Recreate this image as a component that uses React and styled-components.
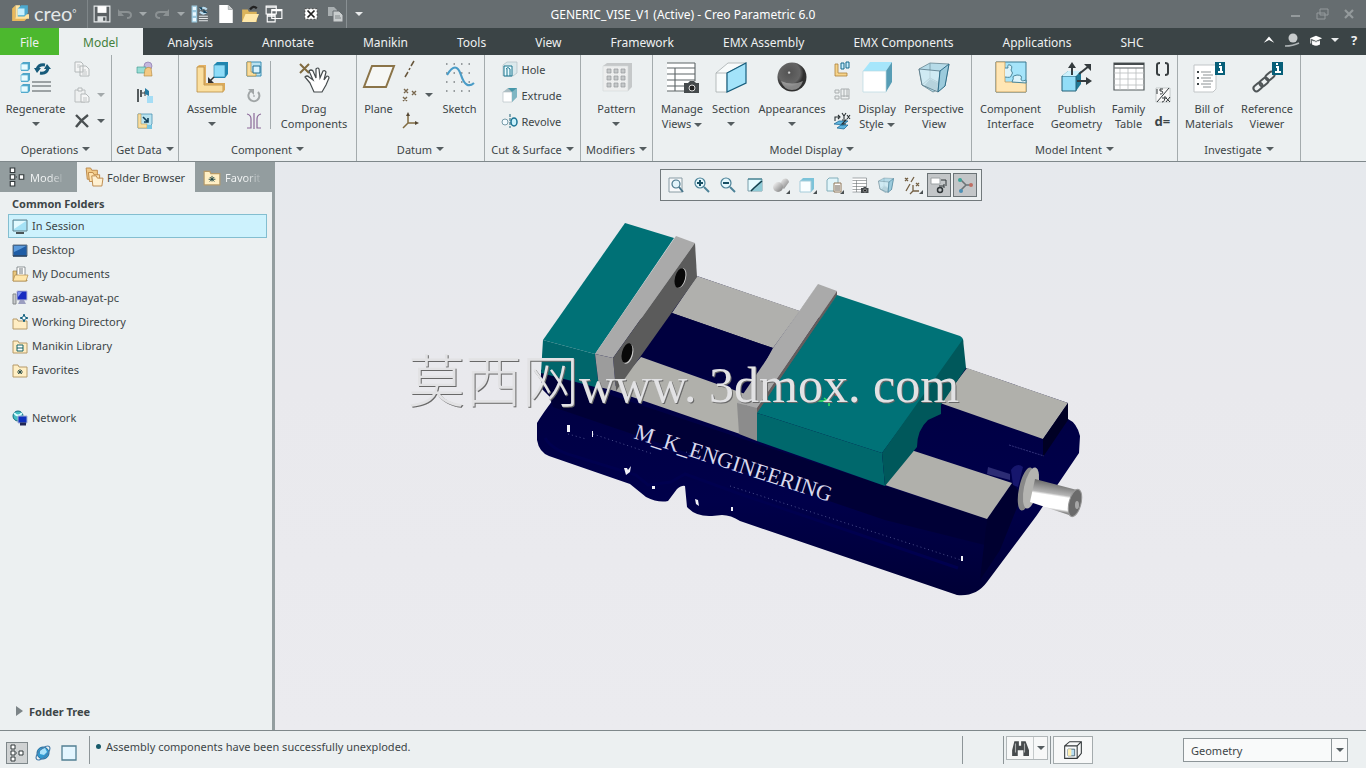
import styled, { createGlobalStyle } from "styled-components";
import { useState } from "react";

const ICONS = {
  logo: <><path d="M1 4l3-3v11h11l-3 3H1z" fill="#e9b85c" /><path d="M4 1h4v8h8v4H4z" fill="#ffe3a1" /><path d="M6 4l3-3h6v7l-3 3H6z" fill="#4da9cf" /><path d="M6 4h6v6H6z" fill="#c8f0fd" /></>,
  save: <><path d="M1 1h14v14H1z" fill="#5b6164" stroke="#e4e8e9" /><path d="M4 1h8v6H4z" fill="#fff" /><path d="M4 10h8v5H4z" fill="#dfe3e4" /><path d="M9 11h2v3H9z" fill="#4d5457" /></>,
  undo: <><path d="M2 6h8q4 0 4 3t-4 3" stroke="#8b9193" strokeWidth="2" /><path d="M1 3v7h6z" fill="#8b9193" /></>,
  redo: <><path d="M14 6H6Q2 6 2 9t4 3" stroke="#8b9193" strokeWidth="2" /><path d="M15 3v7H9z" fill="#8b9193" /></>,
  regenSmall: <><path d="M1 1h4v4H1zM1 6h4v4H1zM1 11h4v4H1z" fill="#e9f8ff" stroke="#9cc9de" /><path d="M8 4q3-3 6 0M14 6q-3 3-6 0" stroke="#b9dcef" strokeWidth="2" /><path d="M7 2h3v3zM15 7h-4V4z" fill="#17445c" /><path d="M7 10h8M7 12h8M7 14h8" stroke="#e4e8e9" /></>,
  newFile: <><path d="M2 0h8l4 4v12H2z" fill="#fff" /><path d="M10 0v4h4" fill="#c9cdce" stroke="#8b9193" strokeWidth=".5" /></>,
  open: <><path d="M1 4h5l1 2h7v9H1z" fill="#dcb45b" /><path d="M1 15l3-7h12l-3 7z" fill="#ffe8aa" /><path d="M8 4q3-4 6-1" stroke="#222" strokeWidth="2" /></>,
  windows: <><path d="M1 1h9v7H1zM6 4h9v8H6zM2 9h7v6H2z" fill="#666d70" stroke="#fff" /><path d="M1 2h9M6 5h9M2 10h7" stroke="#fff" /></>,
  closeWin: <><path d="M1 2h14v12H1z" fill="#fff" /><path d="M4 4l8 8M12 4l-8 8" stroke="#222" strokeWidth="2" /><path d="M1 2h14v12H1z" stroke="#333" strokeDasharray="2 2" /></>,
  copyGray: <><path d="M1 1h6l3 3v6H1z" fill="#a9afb1" /><path d="M6 5h6l4 4v7H6z" fill="#c9cdce" stroke="#666d70" /><path d="M8 10h5M8 12h6" stroke="#81888a" /></>,
  copy: <><path d="M1 1h6l2 2v8H1zM6 5h6l3 3v7H6z" fill="#f4f5f5" stroke="#b3b8b9" /><path d="M3 4h3M3 6h3M8 9h4M8 11h5M8 13h5" stroke="#c2c6c7" /></>,
  paste: <><path d="M1 3h10v12H1z" fill="#eef0f0" stroke="#b9bdbe" /><path d="M4 1h4v3H4zM7 7h5l3 3v5H7z" fill="#f5f6f6" stroke="#b3b8b9" /><path d="M9 11h4M9 13h4" stroke="#c2c6c7" /></>,
  remove: <path d="M2 2l12 12M14 2q-7 5-12 12" stroke="#4a5052" strokeWidth="2.4" />,
  regenerate: <><path d="M1 3l2-2h7v7L8 10H1zM1 14l2-2h7v7l-2 2H1zM1 25l2-2h7v7l-2 2H1z" fill="#4fa5c8" /><path d="M1 3h7v6H1zM1 14h7v6H1zM1 25h7v6H1z" fill="#e9fbff" stroke="#5db4d6" strokeWidth=".7" /><path d="M17 8q2-5 8-4M28 7q-1 6-8 5" stroke="#175a7a" strokeWidth="3" /><path d="M14 7h7l-4 5zM24 8h7l-4-5z" fill="#175a7a" /><path d="M12 21h19M12 25h19M12 30h19" stroke="#81888a" strokeWidth="1.4" /></>,
  userDef: <><circle cx="11" cy="5" r="4" fill="#c4b8dc" stroke="#7d6aa5" strokeWidth=".6" /><path d="M0 6h9v6H0z" fill="#98ddd5" stroke="#3a948b" strokeWidth=".6" /><path d="M8 8q3-3 6-1l1 8H7z" fill="#f3c983" stroke="#b0843a" strokeWidth=".6" /></>,
  copyGeom: <><path d="M1 2v13M4 3v7" stroke="#30383a" strokeWidth="1.6" /><path d="M5 6h6M8 4v5" stroke="#30383a" /><path d="M10 9h6v7h-6z" fill="#a5ddf5" /><path d="M8 1l4 3v5l-4-2z" fill="#267ba2" /></>,
  shrink: <><path d="M1 1h14v10l-4 4H1z" fill="#b8e3f0" stroke="#4d93b2" strokeWidth=".8" /><path d="M1 1h3v10h6v4H1z" fill="#f7dfa2" stroke="#b88c43" strokeWidth=".5" /><path d="M6 4l5 5M11 5v4H7" stroke="#12405a" strokeWidth="1.6" /><path d="M10 12h5v4h-5z" fill="#76c5e0" /></>,
  assemble: <><path d="M1 6l2-2h7v20l-2 4H1z" fill="#e2b164" /><path d="M1 6h7v18h19v7H1z" fill="#fbdf9f" stroke="#b88c43" strokeWidth=".8" /><path d="M8 24l2-2h19l-2 2zM27 24l2-2v7l-2 2z" fill="#d9a95a" /><path d="M18 4l3-3h11v12l-3 4H18z" fill="#1f86b0" /><path d="M18 4h11v12H18z" fill="#8edcf8" stroke="#3089b0" strokeWidth=".7" /><path d="M18 16l-5 5" stroke="#333" strokeWidth="1.5" /><path d="M12 16v6h6z" fill="#333" /></>,
  create: <><path d="M1 1h14v14H1z" fill="#b9e2f0" stroke="#398db2" /><path d="M1 1h4v10h5v4H1z" fill="#f9dc99" stroke="#b88c43" strokeWidth=".7" /><path d="M7 5h7v7H7z" fill="#d9f3fd" stroke="#1d6d92" /></>,
  repeat: <><path d="M5 4a5.5 5.5 0 1 0 7 1" stroke="#a1a6a7" strokeWidth="2" /><path d="M2 2h6v6z" fill="#a1a6a7" /><circle cx="8" cy="9" r="1" fill="#b1b6b7" /></>,
  mirror: <path d="M8 0v16M1 1q4 1 4 5v9H1M15 1q-4 1-4 5v9h4" stroke="#8b6999" strokeWidth="1.2" />,
  drag: <><path d="M2 3l9 9M11 3l-9 9" stroke="#806b40" strokeWidth="2" /><path d="M12 22l-5-6q2-2 4 0l4 3-4-9q2-2 4 0l3 7V8q2-2 3 0l1 9 3-7q2-1 3 1l-2 8 3-4q2 0 2 2l-3 7-4 7H16z" fill="#fff" stroke="#454b4d" strokeWidth="1.2" /></>,
  plane: <path d="M9 5h22l-8 21H1z" fill="#f6f7f5" stroke="#8b7448" strokeWidth="2" />,
  axis: <path d="M12 0L9 5M8 7L7 9M6 11l-3 5" stroke="#68563c" strokeWidth="1.5" />,
  points: <path d="M2 2l4 4M6 2L2 6M10 4l4 4M14 4l-4 4M1 10l4 4M5 10l-4 4" stroke="#77664c" strokeWidth="1.4" />,
  csys: <><path d="M6 10V2M6 10h9M6 10l-5 5" stroke="#806b40" strokeWidth="1.5" /><path d="M4 3l2-4 2 4zM13 8l4 2-4 2z" fill="#554733" /></>,
  sketch: <><path d="M2 3h29M2 12h29M2 21h29M2 30h29" stroke="#42494c" strokeDasharray="1.5 6" /><path d="M3 14Q12-1 17 14t13 8" stroke="#4a9cc7" strokeWidth="2.2" /></>,
  hole: <><path d="M1 4l4-3h10v11l-4 3H1z" fill="#dbe9ec" stroke="#b1bfc4" strokeWidth=".7" /><path d="M2 5h8v10H2z" fill="#eafbff" stroke="#1b748d" /><path d="M4 8q2-3 4 0v7M5 8v7" stroke="#1b748d" /></>,
  extrude: <><path d="M1 5l5-4h9v9l-5 5H1z" fill="#a9bdc3" /><path d="M1 5h9v10H1z" fill="#fff" stroke="#b8c2c5" strokeWidth=".7" /><path d="M10 5l5-4v9l-5 5z" fill="#7fb6c3" /><path d="M6 1h9l-5 4z" fill="#4697a9" /></>,
  revolve: <><path d="M8 1v14" stroke="#1c6075" strokeDasharray="3 1" /><ellipse cx="3" cy="9" rx="3" ry="3" fill="#f3fbff" stroke="#779ba8" /><ellipse cx="12" cy="9" rx="3" ry="4" fill="#c8f0fb" stroke="#1b7494" strokeWidth="1.5" /></>,
  pattern: <><path d="M2 5l4-3h25v24l-4 4H2z" fill="#c5c8c9" /><path d="M2 5h25v25H2z" fill="#edeeee" stroke="#d5d8d9" strokeWidth=".6" />{[8, 15, 22].map((y) => <path key={y} d={`M6 ${y}h4v4H6zM13 ${y}h4v4h-4zM20 ${y}h4v4h-4z`} fill="#c5c8c9" stroke="#96999b" strokeWidth=".7" />)}</>,
  views: <><path d="M1 2h28v28H1z" fill="#fff" /><path d="M1 2h28M1 7h28M1 13h28M1 19h28M1 25h19M1 30h19M9 7v23M29 2v18" stroke="#5d6466" strokeWidth="1.1" /><path d="M18 22h4l2-2h4l2 2h3v10H18z" fill="#454a4c" /><circle cx="26" cy="27" r="3" fill="#222" stroke="#ddd" /></>,
  section: <><path d="M1 12L13 2h18L12 12v19H1z" fill="#f8fbfb" stroke="#a7adaf" strokeWidth=".8" /><path d="M1 12h11" stroke="#a7adaf" strokeWidth=".8" /><path d="M12 12L31 2v20L12 31z" fill="#a3e3fa" stroke="#155d7d" strokeWidth="1.2" /></>,
  sphere: <><defs><radialGradient id="ball" cx=".4" cy=".35"><stop offset="0" stopColor="#fff" /><stop offset=".12" stopColor="#555" /><stop offset=".75" stopColor="#656565" /><stop offset="1" stopColor="#303030" /></radialGradient></defs><circle cx="16" cy="16" r="14.5" fill="url(#ball)" /><path d="M5 20q11 5 22 0-3 9-11 9T5 20z" fill="#b5b5b5" opacity=".65" /></>,
  explode: <><path d="M1 3h3v9h9v3H1z" fill="#f6d48b" stroke="#ad823b" strokeWidth=".8" /><path d="M7 2h3v6H7zM12 1h3v6h-3z" fill="#c7efff" stroke="#15698b" /></>,
  explodeGray: <><path d="M1 3h4v3H1zM1 9h4v3H1zM7 2h8v10H7z" fill="#edf0f0" stroke="#a9aeaf" /><path d="M10 2v8M13 2v8M7 9h8" stroke="#a9aeaf" /></>,
  dimension: <><path d="M0 11l5-3h9l-5 4zM3 15l4-3h7l-4 4z" fill="#5fb5df" stroke="#126190" strokeWidth=".7" /><path d="M1 8V4h4M4 2l2 2-2 2M8 0l2 3 2-3M10 3v3M13 2l3 4M16 2l-3 4M8 7h4l-4 4h4" stroke="#293033" strokeWidth="1.1" /></>,
  shaded: <><path d="M2 10L9 1h22l-6 9v21H2z" fill="#a6e6fb" /><path d="M25 10l6-9v20l-6 10z" fill="#579db5" /><path d="M2 10h23v21H2z" fill="#fff" stroke="#b9d8e1" strokeWidth=".7" /></>,
  perspective: <><path d="M1 8l11-6 19 1-4 22-12 6L4 24z" fill="#b6dbe8" stroke="#668591" strokeWidth=".8" /><path d="M12 2v15l15 8M12 17l-8 7" stroke="#7799a6" strokeWidth=".8" /><path d="M12 18l14 7-6 5-14-5z" fill="#7fa9b8" /><path d="M1 8l21 2-2 21-16-7z" fill="#e3f5fb" fillOpacity=".55" stroke="#547584" strokeWidth=".8" /><path d="M22 10l9-7-4 22-7 6z" fill="#9ccbdc" stroke="#2f6d88" strokeWidth="1" /></>,
  puzzle: <><path d="M1 1h30v30H1z" fill="#a5e4fa" stroke="#397890" /><path d="M1 1h9v20h21v10H1z" fill="#ffe6b4" stroke="#c19758" strokeWidth=".8" /><path d="M10 7h3q-1-4 2-3t1 5q3 3 0 6 0 2-6 1M17 21q2-4 1-5t4-2q6 0 4 4 0 3 5 1v3z" fill="#ddf3fa" stroke="#49869b" /></>,
  publish: <><path d="M1 15l6-5h13v13l-5 7H1z" fill="#217a96" /><path d="M1 15h14v15H1z" fill="#92ddf7" stroke="#226078" /><path d="M1 15l6-5h13l-5 5z" fill="#cdf0fb" /><path d="M11 14V4M18 13L28 5M16 20h12" stroke="#343b3e" strokeWidth="2" /><path d="M7 7l4-6 4 6zM23 3h7v7zM25 16l6 4-6 4z" fill="#343b3e" /></>,
  table: <><path d="M1 2h30v27H1z" fill="#fff" stroke="#555c5e" strokeWidth="1.2" /><path d="M1 3h30" stroke="#454b4d" strokeWidth="2" /><path d="M7 7v22M15 7v22M23 7v22M1 12h30M1 18h30M1 24h30" stroke="#b9bdbe" strokeWidth=".8" /><path d="M1 7h30" stroke="#6d7476" strokeWidth="1.2" /></>,
  brackets: <path d="M5 2Q2 2 2 4v8q0 2 3 2M10 2q3 0 3 2v8q0 2-3 2" stroke="#383e40" strokeWidth="2" />,
  relations: <><path d="M1 1h14v14H1z" fill="#f9f9f9" stroke="#a9aeb0" strokeWidth=".6" /><path d="M2 2v5M8 2H5v2h2q2 3-2 3M14 1L2 15M7 15q3 0 3-6M7 11h5M11 11l4 4M15 10l-4 5" stroke="#303638" /></>,
  bom: <><path d="M1 4h22v24l-3 3H1z" fill="#fff" stroke="#c1c5c7" /><path d="M8 11h10M8 17h10M8 23h10M10 14h10M10 20h10M10 26h8" stroke="#8b9193" strokeWidth="1" /><path d="M4 10h2v2H4zM4 16h2v2H4zM4 22h2v2H4z" fill="#3d4547" /><path d="M22 1h10v13H22z" fill="#075f79" /><path d="M26 6h2v5m-3 0h5M26 3h2" stroke="#fff" strokeWidth="2" /></>,
  chain: <><g stroke="#4f5557" strokeWidth="2"><rect x="2" y="23" width="10" height="6" rx="3" transform="rotate(-42 7 26)" /><rect x="8" y="18" width="10" height="6" rx="3" transform="rotate(-42 13 21)" /><rect x="14" y="12" width="10" height="6" rx="3" transform="rotate(-42 19 15)" /></g><path d="M21 1h11v13H21z" fill="#075f79" /><path d="M25 6h2v5m-3 0h6M25 3h2" stroke="#fff" strokeWidth="2" /></>,
  tree: <><path d="M2 0h4v4H2zM2 6h4v4H2zM2 12h4v4H2zM10 6h4v4h-4z" fill="#fff" stroke="#31383a" /><path d="M7 8h1" stroke="#31383a" /></>,
  folders: <><path d="M1 0h4l1 2h5v8H2z" fill="#f2cb88" stroke="#b98445" strokeWidth=".8" /><path d="M3 4h4l1 2h5v6H4z" fill="#ffe4b0" stroke="#b98445" strokeWidth=".8" /><path d="M6 7h4l1 2h5l-1 7H7z" fill="#fff1d2" stroke="#b98445" strokeWidth=".8" /></>,
  monitor: <><path d="M1 2h14v11H1z" fill="#a5e2f6" stroke="#63808a" /><path d="M2 3h12L2 11z" fill="#e2faff" /><path d="M4 15h8" stroke="#4a5557" strokeWidth="2" /></>,
  desktop: <><path d="M1 3h14v11H1z" fill="#1e5ca5" stroke="#657582" /><path d="M2 4h12Q9 7 2 10z" fill="#5b9adb" /><path d="M1 14h14" stroke="#213e61" strokeWidth="1.4" /></>,
  documents: <><path d="M1 5h4v9h10v1H1z" fill="#e9c77e" stroke="#a27b38" strokeWidth=".7" /><path d="M5 1h8v9H5z" fill="#fff" stroke="#636b6e" strokeWidth=".7" /><path d="M7 3h4M7 5h4M7 7h4" stroke="#71797c" /><path d="M3 9h13l-2 6H1z" fill="#ffe6aa" stroke="#b08a4a" strokeWidth=".7" /></>,
  pc: <><path d="M1 4h3v10H1z" fill="#c7cacb" stroke="#85898b" /><path d="M5 1h10v9H5z" fill="#172bc1" stroke="#babdd7" /><path d="M6 2h4L6 7z" fill="#7e94f3" /><path d="M8 10h4l2 4H6z" fill="#9b9ec0" /></>,
  workdir: <><path d="M1 5h4l1 2h9v8H1z" fill="#ffedc3" stroke="#b69a68" /><path d="M12 0l1 3 3 1-3 1-1 3-1-3-3-1 3-1z" fill="#fff" stroke="#126180" /></>,
  library: <><path d="M1 3h5l1 2h8v10H1z" fill="#ffedc3" stroke="#b69a68" /><path d="M5 7h6v6H5zM5 10h6" fill="#fff" stroke="#126164" /></>,
  star: <><path d="M1 3h5l1 2h8v10H1z" fill="#ffefc4" stroke="#b69a68" /><path d="M8 7v5M5 10h6M6 8l4 4M10 8l-4 4" stroke="#173f40" strokeWidth=".8" /></>,
  network: <><circle cx="6" cy="6" r="5" fill="#45bec4" stroke="#146b80" /><path d="M2 3q4 5 8 0" stroke="#d8ffff" strokeWidth="2" /><path d="M6 6h9v7H6z" fill="#1030bd" stroke="#a6b4d5" /><path d="M8 14h6" stroke="#202756" strokeWidth="3" /></>,
  refit: <><path d="M1 1h13v14H1z" fill="#f7f9fa" stroke="#899ca4" /><circle cx="8" cy="7" r="4" fill="#e2f4fa" stroke="#48768b" strokeWidth="1.2" /><path d="M11 10l4 5" stroke="#48768b" strokeWidth="2" /></>,
  zoomIn: <><circle cx="6" cy="6" r="5" fill="#e4f7fc" stroke="#4c8298" strokeWidth="1.2" /><path d="M10 10l5 5" stroke="#4c8298" strokeWidth="2" /><path d="M3 6h6M6 3v6" stroke="#174f64" strokeWidth="2" /></>,
  zoomOut: <><circle cx="6" cy="6" r="5" fill="#e4f7fc" stroke="#4c8298" strokeWidth="1.2" /><path d="M10 10l5 5" stroke="#4c8298" strokeWidth="2" /><path d="M3 6h6" stroke="#174f64" strokeWidth="2" /></>,
  repaint: <><path d="M1 2h14v12H1z" fill="#e5fbff" stroke="#7b9eaa" /><path d="M15 2v12H3z" fill="#8fcbd6" /><path d="M15 4L7 11l-3 3" stroke="#153f4c" strokeWidth="1.5" /><path d="M1 2h14" stroke="#2a7384" /></>,
  spheres: <><defs><linearGradient id="metal" x1="0" y1="0" x2="1" y2="1"><stop stopColor="#fff" /><stop offset="1" stopColor="#777" /></linearGradient></defs><path d="M6 8l4-6q5-2 6 3l-5 7z" fill="url(#metal)" /><ellipse cx="5" cy="10" rx="5" ry="5" fill="url(#metal)" /><path d="M17 13v4h-4z" fill="#4a5052" /></>,
  style: <><path d="M1 4l3-3h11v11l-3 3H1z" fill="#7cc3d9" /><path d="M1 4h11v11H1z" fill="#f9feff" stroke="#a5ccda" /><path d="M18 13v4h-4z" fill="#4a5052" /></>,
  savedViews: <><path d="M1 3l2-2h9v11l-2 2H1z" fill="#e1f5fa" stroke="#83aeba" /><path d="M8 6h7v9H8z" fill="#fff" stroke="#8e7758" /><path d="M9 9h5M9 11h5M9 13h5" stroke="#685e51" /><path d="M18 13v4h-4z" fill="#4a5052" /></>,
  flags: <><path d="M0 1l3 3M3 1L0 4M9 0L6 5M5 7l-4 7M8 8v6h6M8 14l-3 3M11 6l3 3M14 6l-3 3" stroke="#746044" strokeWidth="1.3" /><path d="M18 13v4h-4z" fill="#4a5052" /></>,
  annot: <><path d="M0 1h9v6H0z" fill="#fff" stroke="#9da2a4" /><path d="M10 3h5v6M8 9h5M13 7v4" stroke="#303638" /><circle cx="9" cy="13" r="2.5" stroke="#303638" strokeWidth="1.5" /></>,
  spin: <><path d="M3 2l6 6M9 8h6M9 8l-6 6" stroke="#6d7476" strokeWidth="1.6" /><circle cx="3" cy="3" r="2" fill="#3ea59b" /><circle cx="14" cy="8" r="2" fill="#bf6e63" /><circle cx="4" cy="14" r="2" fill="#4d90b5" /></>,
  globe: <><circle cx="8" cy="8" r="6" fill="#2f9ad1" stroke="#236c9b" /><path d="M5 5l5-2 2 4-3 3-4-1z" fill="#abe2fa" /><ellipse cx="8" cy="8" rx="9" ry="4" transform="rotate(-45 8 8)" stroke="#4a7fac" strokeWidth="1.2" /></>,
  pane: <path d="M1 1h14v14H1z" fill="#e4f6ff" stroke="#527f93" strokeWidth="1.3" />,
  binoculars: <><path d="M3 2h4v4h2V2h4l3 8v5h-5v-5H6v5H1v-5z" fill="#474b4d" /><path d="M4 4v8M12 4v8" stroke="#a9acad" /></>,
  box3d: <><path d="M2 7l6-5h14v14l-5 6H2zM2 7h15v15M17 7l5-5" fill="#f9fafa" stroke="#34393b" strokeWidth="1.3" /><path d="M6 11h8v8H6z" fill="#b9dff3" stroke="#455d69" /><path d="M6 11h4v8H6z" fill="#fff0b5" /></>,
  up: <path d="M2 11l6-7 6 7-6-3z" fill="#fff" />,
  person: <><circle cx="9" cy="6" r="4.5" fill="#c7cbcc" /><path d="M1 14q8 0 14-3" stroke="#aeb4b6" strokeWidth="1.5" /></>,
  cap: <><path d="M1 6l7-3 7 3-7 3z" fill="#fff" /><path d="M4 9q4 3 8 0v4q-4 2-8 0zM2 6v6" fill="#fff" stroke="#fff" /></>,
  min: <path d="M4 10h9" stroke="#949a9c" strokeWidth="2" />,
  restore: <path d="M6 3h8v6H6zM3 7h8v6H3z" fill="#666d70" stroke="#949a9c" />,
  close: <path d="M4 4l8 8M12 4l-8 8" stroke="#949a9c" strokeWidth="2.2" />,
};

const BIG = ["regenerate", "assemble", "drag", "plane", "sketch", "pattern", "views", "section", "sphere", "shaded", "perspective", "puzzle", "publish", "table", "bom", "chain"];

const Icon = ({ name, size = 16 }) => {
  const box = name === "box3d" ? 24 : BIG.includes(name) ? 32 : 16;
  return <Svg $size={size} viewBox={`0 0 ${box} ${box}`} aria-hidden="true">{ICONS[name]}</Svg>;
};

const TABS = ["Analysis", "Annotate", "Manikin", "Tools", "View", "Framework", "EMX Assembly", "EMX Components", "Applications", "SHC"];

const FOLDERS = [
  ["monitor", "In Session"],
  ["desktop", "Desktop"],
  ["documents", "My Documents"],
  ["pc", "aswab-anayat-pc"],
  ["workdir", "Working Directory"],
  ["library", "Manikin Library"],
  ["star", "Favorites"],
  ["network", "Network"],
];

const VIEW_TOOLS = [
  ["refit", "Refit"], ["zoomIn", "Zoom in"], ["zoomOut", "Zoom out"], ["repaint", "Repaint"],
  ["spheres", "Rendering"], ["style", "Display style"], ["savedViews", "Saved orientations"], ["views", "View manager"],
  ["perspective", "Perspective"], ["flags", "Datum display"], ["annot", "Annotation display"], ["spin", "Spin center"],
];

const BigTool = ({ icon, lines, width, drop, inlineDrop }) => (
  <BigButton $width={width}>
    <Icon name={icon} size={32} />
    <BigLabel>
      <span>{lines[0]}</span>
      {lines[1] && <span>{lines[1]}{inlineDrop && <Caret $left={3} />}</span>}
      {drop && <CaretLine><Caret /></CaretLine>}
    </BigLabel>
  </BigButton>
);

const SmallTool = ({ icon, title, drop, dim }) => (
  <SmallButton aria-label={title} title={title}>
    <Icon name={icon} />
    {drop && <Caret $left={7} $dim={dim} />}
  </SmallButton>
);

const Group = ({ label, width, children }) => (
  <GroupBox $width={width}>
    <GroupTools>{children}</GroupTools>
    <GroupLabel>{label}<Caret $left={4} /></GroupLabel>
  </GroupBox>
);

const Ribbon = () => (
  <RibbonBar>
    <Group label="Operations" width={112}>
      <BigTool icon="regenerate" lines={["Regenerate"]} width={60} drop />
      <SmallColumn $width={32}>
        <SmallTool icon="copy" title="Copy" />
        <SmallTool icon="paste" title="Paste" drop dim />
        <SmallTool icon="remove" title="Delete" drop />
      </SmallColumn>
    </Group>
    <Group label="Get Data" width={67}>
      <SmallColumn $width={16}>
        <SmallTool icon="userDef" title="User-defined feature" />
        <SmallTool icon="copyGeom" title="Copy geometry" />
        <SmallTool icon="shrink" title="Shrinkwrap" />
      </SmallColumn>
    </Group>
    <Group label="Component" width={178}>
      <BigTool icon="assemble" lines={["Assemble"]} width={52} drop />
      <SmallColumn $width={16}>
        <SmallTool icon="create" title="Create" />
        <SmallTool icon="repeat" title="Repeat" />
        <SmallTool icon="mirror" title="Mirror component" />
      </SmallColumn>
      <ToolSeparator />
      <BigTool icon="drag" lines={["Drag", "Components"]} width={70} />
    </Group>
    <Group label="Datum" width={128}>
      <BigTool icon="plane" lines={["Plane"]} width={30} />
      <SmallColumn $width={32}>
        <SmallTool icon="axis" title="Axis" />
        <SmallTool icon="points" title="Point" drop />
        <SmallTool icon="csys" title="Coordinate system" />
      </SmallColumn>
      <BigTool icon="sketch" lines={["Sketch"]} width={36} />
    </Group>
    <Group label="Cut & Surface" width={96}>
      <SmallColumn $width={62}>
        <SmallButton><Icon name="hole" />Hole</SmallButton>
        <SmallButton><Icon name="extrude" />Extrude</SmallButton>
        <SmallButton><Icon name="revolve" />Revolve</SmallButton>
      </SmallColumn>
    </Group>
    <Group label="Modifiers" width={72}>
      <BigTool icon="pattern" lines={["Pattern"]} width={40} drop />
    </Group>
    <Group label="Model Display" width={319}>
      <BigTool icon="views" lines={["Manage", "Views"]} width={44} inlineDrop />
      <BigTool icon="section" lines={["Section"]} width={38} drop />
      <BigTool icon="sphere" lines={["Appearances"]} width={68} drop />
      <SmallColumn $width={16}>
        <SmallTool icon="explode" title="Exploded view" />
        <SmallTool icon="explodeGray" title="Edit position" />
        <SmallTool icon="dimension" title="Toggle status" />
      </SmallColumn>
      <BigTool icon="shaded" lines={["Display", "Style"]} width={38} inlineDrop />
      <BigTool icon="perspective" lines={["Perspective", "View"]} width={60} />
    </Group>
    <Group label="Model Intent" width={206}>
      <BigTool icon="puzzle" lines={["Component", "Interface"]} width={64} />
      <BigTool icon="publish" lines={["Publish", "Geometry"]} width={52} />
      <BigTool icon="table" lines={["Family", "Table"]} width={36} />
      <SmallColumn $width={16}>
        <SmallTool icon="brackets" title="Parameters" />
        <SmallTool icon="relations" title="Switch dimensions" />
        <SmallButton $bold>d=</SmallButton>
      </SmallColumn>
    </Group>
    <Group label="Investigate" width={123}>
      <BigTool icon="bom" lines={["Bill of", "Materials"]} width={48} />
      <BigTool icon="chain" lines={["Reference", "Viewer"]} width={52} />
    </Group>
  </RibbonBar>
);

const ViseModel = () => (
  <Canvas viewBox="275 162 1091 568" role="img" aria-label="Vise assembly">
    <defs>
      <linearGradient id="shaft" x1=".1" y1="0" x2="-.1" y2="1">
        <stop offset="0" stopColor="#6b6b6b" /><stop offset=".3" stopColor="#b5b5b5" />
        <stop offset=".36" stopColor="#fff" /><stop offset=".68" stopColor="#fff" />
        <stop offset=".75" stopColor="#8f8f8f" /><stop offset="1" stopColor="#555" />
      </linearGradient>
      <linearGradient id="navy" x1="0" y1="0" x2="0" y2="1">
        <stop offset="0" stopColor="#00003c" /><stop offset=".7" stopColor="#00004a" /><stop offset="1" stopColor="#000036" />
      </linearGradient>
    </defs>
    {/* base casting */}
    <path d="M541 370L541 388L553 400Q543 413 537 423L537 440Q539 452 549 456L630 484L646 497Q658 503 668 501L677 489Q682 485 685 486L687 507Q696 517 712 516L722 515Q731 515 740 521L957 595Q976 597 987 582L1037 515L1079 453L1080 436Q1077 423 1068 419L1068 403L966 368L697 276L595 354Z" fill="url(#navy)" />
    <path d="M541 372L885 486L987 519L985 545L885 520L553 407Z" fill="#000036" />
    <path d="M987 519L1012 483L1022 495L1000 550L980 580Z" fill="#000030" />
    <path d="M545 438Q552 450 574 456L636 475L648 485L671 482L685 474L740 494L958 568" fill="none" stroke="#00004f" strokeWidth="3" />
    <path d="M568 434l18 5M593 434l60 20M686 452l14 5M730 486L961 560" fill="none" stroke="#6a70a8" strokeWidth=".7" strokeDasharray="1 3" />
    <path d="M567 425h3v7h-3zM592 431h1v6h-1zM624 468h3l1 2 3-4-1 6-4 3zM652 486h3v3h-3zM695 499l3 1 1 6-3-2zM731 507h2v4h-2zM961 556h2v5h-2z" fill="#f1f1f8" />
    {/* rails */}
    <path d="M697 276L800 311L773 348L672 313Z" fill="#b0b0ad" />
    <path d="M672 313L773 348L748 389L641 357Z" fill="#00003f" />
    <path d="M800 310L818 284L760 372L773 348Z" fill="#aaa" />
    <path d="M641 357L748 395L740 434L612 390Z" fill="#b0b0ab" />
    <path d="M967 368L1068 403L1043 439L940 403Z" fill="#b0b0ab" />
    <path d="M908 449L1012 483L987 519L885 485Z" fill="#b0b0ab" />
    <path d="M1068 403L1068 420L1043 457V439Z" fill="#000024" />
    <path d="M988 467L1010 474V480L987 474Z" fill="#2c2c74" />
    <path d="M1009 445l35 11" stroke="#33337a" strokeDasharray="2 1" />
    {/* fixed jaw */}
    <path d="M625 223L674 238L595 354L543 340Z" fill="#007176" />
    <path d="M543 340L595 354L599 388L541 373Z" fill="#00666b" />
    <path d="M676 236L695 243L613 358L595 354Z" fill="#aaa" />
    <path d="M695 243L697 277L616 391L613 358Z" fill="#5b5b5b" />
    <path d="M595 354L613 358L616 391L599 387Z" fill="#9c9c9c" />
    <g fill="#c9c9c9">
      <ellipse cx="681" cy="278" rx="5" ry="10" transform="rotate(15 681 278)" />
      <ellipse cx="628" cy="354" rx="5" ry="10" transform="rotate(15 628 354)" />
    </g>
    <g fill="#080808">
      <ellipse cx="680" cy="278" rx="5" ry="10" transform="rotate(15 680 278)" />
      <ellipse cx="627" cy="353" rx="5" ry="10" transform="rotate(15 627 353)" />
    </g>
    {/* sliding jaw */}
    <path d="M818 284L837 291L757 409L737 403Z" fill="#aaa" />
    <path d="M737 403L757 408V441L739 434Z" fill="#8c8c8c" />
    <path d="M837 291V296L757 414V408Z" fill="#655d5d" />
    <path d="M837 295L960 336Q964 338 963 343L882 453L757 413Z" fill="#007277" />
    <path d="M757 413L882 453L885 486L757 441Z" fill="#00686c" />
    <path d="M882 453L963 339L966 368L941 405V414L928 420Q917 430 917 447L885 486Z" fill="#00585b" />
    {/* lead screw */}
    <path d="M1011 470q6-8 12-3l-5 20-5-2z" fill="#16166d" />
    <ellipse cx="1026" cy="489" rx="7" ry="22" transform="rotate(12 1026 489)" fill="#898989" />
    <ellipse cx="1031" cy="488" rx="7" ry="21" transform="rotate(12 1031 488)" fill="#b4b4b1" />
    <path d="M1035 479L1077 490L1072 516L1030 502Z" fill="url(#shaft)" />
    <ellipse cx="1075" cy="503" rx="6" ry="14" transform="rotate(14 1075 503)" fill="#6b6b6b" stroke="#999" />
    <ellipse cx="1077" cy="505" rx="2" ry="4" fill="#a7a7a7" />
    <Engraving x="633" y="438" transform="rotate(18 633 438)">M_K_ENGINEERING</Engraving>
    <path d="M811 401h17l-4-3M829 406v-7" stroke="#38e866" strokeWidth="1.5" fill="none" />
    <path d="M835 394l4 1" stroke="#ad5555" strokeWidth="3" />
    <Watermark x="408" y="402"><HanText>莫西网</HanText>www. 3dmox. com</Watermark>
  </Canvas>
);

export default function App() {
  const [folder, setFolder] = useState("In Session");

  return (
    <Page>
      <GlobalStyle />
      <TitleBar>
        <QuickBar>
          <Brand><Icon name="logo" size={18} />creo<sup>°</sup></Brand>
          <QuickButton $width={22} aria-label="Save"><Icon name="save" size={18} /></QuickButton>
          <QuickButton $width={24} aria-label="Undo"><Icon name="undo" /></QuickButton>
          <QuickButton $width={12} aria-label="Undo list"><Caret $dim /></QuickButton>
          <QuickButton $width={26} aria-label="Redo"><Icon name="redo" /></QuickButton>
          <QuickButton $width={12} aria-label="Redo list"><Caret $dim /></QuickButton>
          <QuickButton $width={26} aria-label="Regenerate"><Icon name="regenSmall" size={18} /></QuickButton>
          <QuickButton $width={26} aria-label="New"><Icon name="newFile" size={18} /></QuickButton>
          <QuickButton $width={22} aria-label="Open"><Icon name="open" size={18} /></QuickButton>
          <QuickButton $width={26} aria-label="Windows"><Icon name="windows" size={18} /></QuickButton>
          <QuickGap />
          <QuickButton $width={26} aria-label="Close window"><Icon name="closeWin" size={14} /></QuickButton>
          <QuickButton $width={22} aria-label="Copy"><Icon name="copyGray" /></QuickButton>
          <QuickDivider />
          <QuickButton $width={24} aria-label="Customize"><Caret $light /></QuickButton>
        </QuickBar>
        <Title>GENERIC_VISE_V1 (Active) - Creo Parametric 6.0</Title>
        <WindowButtons>
          <QuickButton $width={27} aria-label="Minimize"><Icon name="min" /></QuickButton>
          <QuickButton $width={27} aria-label="Restore"><Icon name="restore" /></QuickButton>
          <QuickButton $width={27} aria-label="Close"><Icon name="close" /></QuickButton>
        </WindowButtons>
      </TitleBar>

      <TabBar>
        <FileTab>File</FileTab>
        <RibbonTab $active>Model</RibbonTab>
        {TABS.map((tab) => <RibbonTab key={tab}>{tab}</RibbonTab>)}
        <TabTools>
          <QuickButton $width={22} aria-label="Collapse ribbon"><Icon name="up" size={14} /></QuickButton>
          <QuickButton $width={24} aria-label="Account"><Icon name="person" /></QuickButton>
          <QuickButton $width={24} aria-label="Learning"><Icon name="cap" size={14} /></QuickButton>
          <QuickButton $width={14} aria-label="Learning list"><Caret $light /></QuickButton>
          <QuickButton $width={24} aria-label="Help">?</QuickButton>
        </TabTools>
      </TabBar>

      <Ribbon />

      <Main>
        <Sidebar>
          <SideTabs>
            <SideTab $width={77}><Icon name="tree" size={18} /><Fade>Model</Fade></SideTab>
            <SideTab $width={118} $active><Icon name="folders" size={18} />Folder Browser</SideTab>
            <SideTab $width={77}><Icon name="star" size={18} /><Fade>Favorit</Fade></SideTab>
          </SideTabs>
          <SideTitle>Common Folders</SideTitle>
          <FolderList>
            {FOLDERS.map(([icon, name]) => (
              <FolderItem key={name} $spaced={name === "Network"}>
                <FolderButton $active={name === folder} onClick={() => setFolder(name)}>
                  <Icon name={icon} />{name}
                </FolderButton>
              </FolderItem>
            ))}
          </FolderList>
          <TreeToggle><TreeArrow />Folder Tree</TreeToggle>
        </Sidebar>
        <View>
          <ViseModel />
          <ViewBar>
            {VIEW_TOOLS.map(([icon, title], i) => (
              <ViewButton key={title} aria-label={title} $active={i > 9}>
                <Icon name={icon} />
              </ViewButton>
            ))}
          </ViewBar>
        </View>
      </Main>

      <StatusBar>
        <StatusButton $active aria-label="Model tree"><Icon name="tree" /></StatusButton>
        <StatusButton aria-label="Browser"><Icon name="globe" /></StatusButton>
        <StatusButton aria-label="Full screen"><Icon name="pane" /></StatusButton>
        <StatusDivider $left={5} $gap={6} />
        <Message><Bullet />Assembly components have been successfully unexploded.</Message>
        <StatusRight>
          <StatusDivider $gap={40} />
          <StatusDivider $gap={2} />
          <FindBox>
            <FindButton $width={26} aria-label="Find"><Icon name="binoculars" size={18} /></FindButton>
            <FindButton $width={14} aria-label="Find options"><Caret /></FindButton>
          </FindBox>
          <StatusDivider $left={2} $gap={2} />
          <BoxButton aria-label="Selection box"><Icon name="box3d" size={20} /></BoxButton>
          <FilterBox>
            <FilterSelect aria-label="Selection filter" defaultValue="Geometry">
              <option>Geometry</option>
              <option>Features</option>
              <option>Parts</option>
            </FilterSelect>
            <FilterArrow><Caret /></FilterArrow>
          </FilterBox>
        </StatusRight>
      </StatusBar>
    </Page>
  );
}

const GlobalStyle = createGlobalStyle`
  * {
    box-sizing: border-box;
  }

  body {
    margin: 0;
    font: 11px/15px "Noto Sans", "Open Sans", sans-serif;
    color: #3d4547;
    background-color: #ecf0f1;
  }

  button {
    font: inherit;
    color: inherit;
    background: none;
    border: 0;
    padding: 0;
    cursor: pointer;
  }
`;

const Page = styled.div`
  display: flex;
  flex-direction: column;
  height: 100vh;
  overflow: hidden;
`;

const Svg = styled.svg`
  width: ${({ $size }) => $size}px;
  height: ${({ $size }) => $size}px;
  flex: none;
  fill: none;
  overflow: visible;
`;

const Caret = styled.i`
  display: inline-block;
  flex: none;
  margin-left: ${({ $left = 0 }) => $left}px;
  border: 4px solid transparent;
  border-top-color: ${({ $light, $dim }) => ($light ? "#e9ebec" : $dim ? "#a3a9ab" : "#555d60")};
  border-bottom: 0;
  vertical-align: middle;
`;

const TitleBar = styled.header`
  display: grid;
  grid-template-columns: 1fr auto 1fr;
  align-items: center;
  flex: none;
  height: 28px;
  background-color: #666d70;
  color: #fff;
`;

const QuickBar = styled.div`
  display: flex;
  align-items: center;
`;

const Brand = styled.div`
  display: flex;
  align-items: center;
  gap: 5px;
  width: 88px;
  height: 28px;
  margin-right: 3px;
  padding: 0 0 2px 11px;
  border-right: 1px solid #7f8689;
  font: 20px/24px Lato, sans-serif;
  color: #e4e8e9;

  sup {
    margin-left: -5px;
    font-size: 10px;
  }
`;

const QuickButton = styled.button`
  display: flex;
  align-items: center;
  justify-content: center;
  width: ${({ $width }) => $width}px;
  height: 24px;
  font-size: 13px;
  font-weight: 700;
`;

const QuickGap = styled.span`
  width: 11px;
`;

const QuickDivider = styled.span`
  width: 1px;
  height: 28px;
  background-color: #899093;
`;

const Title = styled.h1`
  margin: 0;
  font-size: 12px;
  font-weight: 400;
`;

const WindowButtons = styled.div`
  display: flex;
  justify-content: flex-end;
  padding-right: 4px;
`;

const TabBar = styled.nav`
  display: flex;
  flex: none;
  height: 27px;
  font-size: 12px;
  background-color: #3b4446;
  color: #eef0f1;
`;

const RibbonTab = styled.button`
  padding: 2px 25px 0 24px;
  white-space: nowrap;
  background-color: ${({ $active }) => ($active ? "#ecf0f1" : "transparent")};
  color: ${({ $active }) => ($active ? "#44803c" : "#eef0f1")};
`;

const FileTab = styled(RibbonTab)`
  width: 59px;
  padding: 2px 0 0;
  background-color: #4cb82e;
`;

const TabTools = styled.div`
  display: flex;
  align-items: center;
  height: 24px;
  margin-left: auto;
`;

const RibbonBar = styled.section`
  display: flex;
  flex: none;
  height: 107px;
  border-bottom: 1px solid #7f888b;
  background-color: #ecf0f1;
`;

const GroupBox = styled.div`
  display: flex;
  flex-direction: column;
  flex: none;
  width: ${({ $width }) => $width}px;
  border-right: 1px solid #a4abad;
`;

const GroupTools = styled.div`
  display: flex;
  justify-content: center;
  gap: 8px;
  height: 85px;
  padding-top: 6px;
`;

const GroupLabel = styled.div`
  display: flex;
  align-items: center;
  justify-content: center;
  height: 18px;
  white-space: nowrap;
`;

const BigButton = styled.button`
  display: flex;
  flex-direction: column;
  align-items: center;
  gap: 8px;
  width: ${({ $width }) => $width}px;
`;

const BigLabel = styled.span`
  display: flex;
  flex-direction: column;
  align-items: center;
  white-space: nowrap;
`;

const CaretLine = styled.span`
  display: flex;
  align-items: center;
  height: 15px;
`;

const SmallColumn = styled.div`
  display: flex;
  flex-direction: column;
  gap: 10px;
  width: ${({ $width }) => $width}px;
`;

const SmallButton = styled.button`
  display: flex;
  align-items: center;
  gap: ${({ title }) => (title ? 0 : 4)}px;
  height: 16px;
  font-size: ${({ $bold }) => ($bold ? 13 : 11)}px;
  font-weight: ${({ $bold }) => ($bold ? 700 : 400)};
`;

const ToolSeparator = styled.span`
  width: 1px;
  height: 68px;
  background-color: #a4abad;
`;

const Main = styled.main`
  display: flex;
  flex: 1;
  min-height: 0;
`;

const Sidebar = styled.aside`
  display: flex;
  flex-direction: column;
  flex: none;
  width: 275px;
  border-right: 3px solid #939d9f;
`;

const SideTabs = styled.div`
  display: flex;
  height: 30px;
`;

const SideTab = styled.button`
  display: flex;
  align-items: center;
  gap: 4px;
  width: ${({ $width }) => $width}px;
  padding-left: 8px;
  overflow: hidden;
  white-space: nowrap;
  background-color: ${({ $active }) => ($active ? "#ecf0f1" : "#939d9f")};
  color: ${({ $active }) => ($active ? "#3d4547" : "#f3f5f5")};
`;

const Fade = styled.span`
  background: linear-gradient(90deg, #f3f5f5 60%, #a9b1b3);
  background-clip: text;
  color: transparent;
`;

const SideTitle = styled.h2`
  margin: 0;
  padding: 4px 12px 3px;
  font-size: 11px;
  line-height: 15px;
  font-weight: 700;
`;

const FolderList = styled.ul`
  flex: 1;
  margin: 0;
  padding: 0 5px 0 8px;
  list-style: none;
`;

const FolderItem = styled.li`
  margin-top: ${({ $spaced }) => ($spaced ? 24 : 0)}px;
`;

const FolderButton = styled.button`
  display: flex;
  align-items: center;
  gap: 4px;
  width: 100%;
  height: 24px;
  padding: 0 0 1px 3px;
  border: 1px solid ${({ $active }) => ($active ? "#83bed0" : "transparent")};
  background-color: ${({ $active }) => ($active ? "#cdf2fd" : "transparent")};
`;

const TreeToggle = styled.button`
  display: flex;
  align-items: center;
  gap: 6px;
  height: 38px;
  padding-left: 16px;
  font-weight: 700;
`;

const TreeArrow = styled.i`
  border: 5px solid transparent;
  border-left: 7px solid #7c8487;
  border-right: 0;
`;

const View = styled.section`
  position: relative;
  flex: 1;
  min-width: 0;
  background: linear-gradient(#e6e9ed, #e9e9ed 40%, #ebebef);
`;

const Canvas = styled.svg`
  display: block;
  width: 100%;
  height: 100%;
`;

const Engraving = styled.text`
  font: 22px "Liberation Serif", serif;
  fill: #d8d8ee;
`;

const Watermark = styled.text`
  font: 50px "Liberation Serif", serif;
  fill: #e2e2e4;
  filter: drop-shadow(1px 1px 0 #686868);
`;

const HanText = styled.tspan`
  font: 300 57px "Noto Sans CJK SC", sans-serif;
`;

const ViewBar = styled.div`
  position: absolute;
  top: 7px;
  left: 50%;
  transform: translateX(-50%);
  display: flex;
  align-items: center;
  justify-content: space-between;
  width: 322px;
  height: 32px;
  padding: 0 3px;
  border: 1px solid #72797c;
  background-color: #ecf0f1;
`;

const ViewButton = styled.button`
  display: flex;
  align-items: center;
  justify-content: center;
  width: 24px;
  height: 24px;
  border: 1px solid ${({ $active }) => ($active ? "#6b7376" : "transparent")};
  background-color: ${({ $active }) => ($active ? "#c3c6c8" : "transparent")};
`;

const StatusBar = styled.footer`
  display: flex;
  align-items: flex-start;
  flex: none;
  height: 38px;
  padding: 5px 18px 0 6px;
  border-top: 1px solid #7f888b;
  background-color: #ecf0f1;
`;

const StatusButton = styled.button`
  display: flex;
  align-items: center;
  justify-content: center;
  width: 22px;
  height: 22px;
  margin: 6px 4px 0 0;
  border: 1px solid ${({ $active }) => ($active ? "#7f888b" : "transparent")};
  background-color: ${({ $active }) => ($active ? "#cfd2d3" : "transparent")};
`;

const StatusDivider = styled.span`
  width: 1px;
  height: 28px;
  margin-right: ${({ $gap }) => $gap}px;
  margin-left: ${({ $left = 0 }) => $left}px;
  background-color: #8d9598;
`;

const Message = styled.p`
  display: flex;
  align-items: center;
  gap: 5px;
  margin: 3px 0 0;
`;

const Bullet = styled.i`
  width: 5px;
  height: 5px;
  border-radius: 50%;
  background-color: #175a6a;
`;

const StatusRight = styled.div`
  display: flex;
  margin-left: auto;
`;

const FindBox = styled.div`
  display: flex;
  height: 24px;
  border: 1px solid #b1b7b9;
  background-color: #f7f8f8;
`;

const FindButton = styled.button`
  display: flex;
  align-items: center;
  justify-content: center;
  width: ${({ $width }) => $width}px;

  & + & {
    border-left: 1px solid #c5cacb;
  }
`;

const BoxButton = styled.button`
  display: flex;
  align-items: center;
  justify-content: center;
  width: 40px;
  height: 28px;
  border: 1px solid #a4abad;
  background-color: #f7f8f8;
`;

const FilterBox = styled.div`
  display: grid;
  grid-template-columns: 1fr 16px;
  width: 165px;
  height: 24px;
  margin: 2px 0 0 90px;
  border: 1px solid #8d9598;
  background-color: #f9fafa;
`;

const FilterSelect = styled.select`
  grid-area: 1 / 1 / 2 / 3;
  appearance: none;
  padding: 0 7px;
  border: 0;
  background: none;
  font: inherit;
  color: inherit;
`;

const FilterArrow = styled.span`
  grid-area: 1 / 2 / 2 / 3;
  display: flex;
  align-items: center;
  justify-content: center;
  border-left: 1px solid #8d9598;
  pointer-events: none;
`;
